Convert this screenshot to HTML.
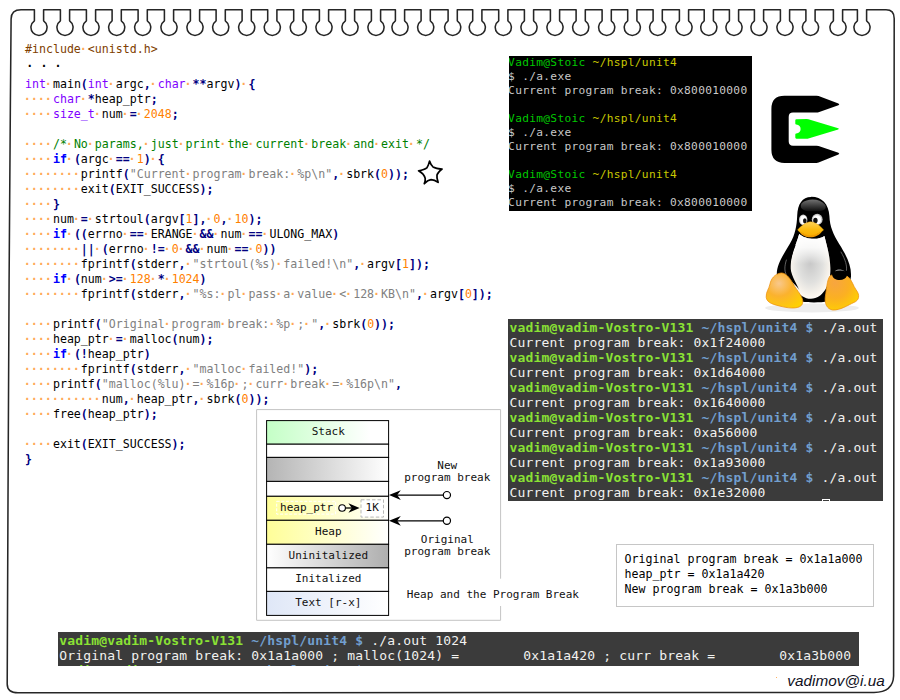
<!DOCTYPE html>
<html lang="en">
<head>
<meta charset="utf-8">
<title>Heap and the Program Break</title>
<style>
html,body{margin:0;padding:0;background:#fff;}
body{width:900px;height:700px;position:relative;overflow:hidden;font-family:"Liberation Sans",sans-serif;}
.abs{position:absolute;}
/* source code */
.code{position:absolute;left:25px;font-family:"DejaVu Sans Mono","Liberation Mono",monospace;font-size:11.6px;line-height:15px;color:#000;}
.code .ln{height:15px;white-space:pre;}
.code i{font-style:normal;font-weight:bold;color:#ffa855;position:relative;left:-1.2px;}
.code .o{color:#000080;font-weight:bold;}
.code .k{color:#0000ff;font-weight:bold;}
.code .t{color:#8000ff;}
.code .n{color:#ff8000;}
.code .s{color:#808080;}
.code .c{color:#008000;}
.code .p{color:#804000;}
/* terminals */
.cyg{position:absolute;left:509px;top:56px;width:243px;height:154.7px;background:#000;color:#c8c8c8;overflow:hidden;
 font-family:"DejaVu Sans Mono","Liberation Mono",monospace;font-size:11.2px;letter-spacing:0.303px;line-height:14px;white-space:pre;}
.cyg div{height:14px;margin-left:-0.9px;}
.cyg .g{color:#00c800;} .cyg .y{color:#c8c800;}
.term{position:absolute;background:#3b3b3b;color:#f2f2f0;overflow:hidden;
 font-family:"DejaVu Sans Mono","Liberation Mono",monospace;font-size:13px;letter-spacing:0.173px;line-height:15px;white-space:pre;}
.term div{height:15px;}
.term b.lg{color:#8ae234;} .term b.lb{color:#729fcf;}
/* diagram */
.dtext{font-family:"DejaVu Sans Mono","Liberation Mono",monospace;font-size:11px;fill:#111;}
.info{position:absolute;left:616px;top:544px;width:256px;height:60.8px;border:1px solid #c6c6c6;background:#fff;
 font-family:"DejaVu Sans Mono","Liberation Mono",monospace;font-size:11.63px;line-height:15px;color:#000;white-space:pre;}
.info div{position:absolute;left:7.6px;height:15px;}
.sig{position:absolute;left:787.2px;top:672px;letter-spacing:0.04px;font-family:"Liberation Sans",sans-serif;font-style:italic;font-size:15.3px;line-height:18px;color:#10101c;white-space:pre;}
</style>
</head>
<body>

<!-- notebook border with spiral notches -->
<svg class="abs" style="left:0;top:0" width="900" height="700" viewBox="0 0 900 700">
<path d="M 7.2 684 L 8.0 500 L 9.1 280 L 10.4 100 L 11.1 19 Q 11.2 9.8 21 9.8 L 34.4 9.8 L 34.4 20.8 A 8.05 8.05 0 1 0 43.6 20.8 L 43.6 9.8 L 60.4 9.8 L 60.4 20.8 A 8.05 8.05 0 1 0 69.6 20.8 L 69.6 9.8 L 86.4 9.8 L 86.4 20.8 A 8.05 8.05 0 1 0 95.6 20.8 L 95.6 9.8 L 112.1 9.8 L 112.1 20.8 A 8.05 8.05 0 1 0 121.3 20.8 L 121.3 9.8 L 138.1 9.8 L 138.1 20.8 A 8.05 8.05 0 1 0 147.3 20.8 L 147.3 9.8 L 164.4 9.8 L 164.4 20.8 A 8.05 8.05 0 1 0 173.6 20.8 L 173.6 9.8 L 190.4 9.8 L 190.4 20.8 A 8.05 8.05 0 1 0 199.6 20.8 L 199.6 9.8 L 216.1 9.8 L 216.1 20.8 A 8.05 8.05 0 1 0 225.3 20.8 L 225.3 9.8 L 242.1 9.8 L 242.1 20.8 A 8.05 8.05 0 1 0 251.3 20.8 L 251.3 9.8 L 267.7 9.8 L 267.7 20.8 A 8.05 8.05 0 1 0 276.9 20.8 L 276.9 9.8 L 293.7 9.8 L 293.7 20.8 A 8.05 8.05 0 1 0 302.9 20.8 L 302.9 9.8 L 319.4 9.8 L 319.4 20.8 A 8.05 8.05 0 1 0 328.6 20.8 L 328.6 9.8 L 345.4 9.8 L 345.4 20.8 A 8.05 8.05 0 1 0 354.6 20.8 L 354.6 9.8 L 371.4 9.8 L 371.4 20.8 A 8.05 8.05 0 1 0 380.6 20.8 L 380.6 9.8 L 395.4 9.8 L 395.4 20.8 A 8.05 8.05 0 1 0 404.6 20.8 L 404.6 9.8 L 421.1 9.8 L 421.1 20.8 A 8.05 8.05 0 1 0 430.3 20.8 L 430.3 9.8 L 448.1 9.8 L 448.1 20.8 A 8.05 8.05 0 1 0 457.3 20.8 L 457.3 9.8 L 472.7 9.8 L 472.7 20.8 A 8.05 8.05 0 1 0 481.9 20.8 L 481.9 9.8 L 498.7 9.8 L 498.7 20.8 A 8.05 8.05 0 1 0 507.9 20.8 L 507.9 9.8 L 524.4 9.8 L 524.4 20.8 A 8.05 8.05 0 1 0 533.6 20.8 L 533.6 9.8 L 550.4 9.8 L 550.4 20.8 A 8.05 8.05 0 1 0 559.6 20.8 L 559.6 9.8 L 576.1 9.8 L 576.1 20.8 A 8.05 8.05 0 1 0 585.3 20.8 L 585.3 9.8 L 602.1 9.8 L 602.1 20.8 A 8.05 8.05 0 1 0 611.3 20.8 L 611.3 9.8 L 627.7 9.8 L 627.7 20.8 A 8.05 8.05 0 1 0 636.9 20.8 L 636.9 9.8 L 653.1 9.8 L 653.1 20.8 A 8.05 8.05 0 1 0 662.3 20.8 L 662.3 9.8 L 679.4 9.8 L 679.4 20.8 A 8.05 8.05 0 1 0 688.6 20.8 L 688.6 9.8 L 704.2 9.8 L 704.2 20.8 A 8.05 8.05 0 1 0 713.4 20.8 L 713.4 9.8 L 729.4 9.8 L 729.4 20.8 A 8.05 8.05 0 1 0 738.6 20.8 L 738.6 9.8 L 754.4 9.8 L 754.4 20.8 A 8.05 8.05 0 1 0 763.6 20.8 L 763.6 9.8 L 780.4 9.8 L 780.4 20.8 A 8.05 8.05 0 1 0 789.6 20.8 L 789.6 9.8 L 805.9 9.8 L 805.9 20.8 A 8.05 8.05 0 1 0 815.1 20.8 L 815.1 9.8 L 833.4 9.8 L 833.4 20.8 A 8.05 8.05 0 1 0 842.6 20.8 L 842.6 9.8 L 857.4 9.8 L 857.4 20.8 A 8.05 8.05 0 1 0 866.6 20.8 L 866.6 9.8 L 886 9.8 Q 894.2 9.8 894.2 18.5 L 893.6 676 Q 893 692.3 874 692.4 L 18 692.8 Q 7.2 692.8 7.2 684" fill="none" stroke="#262626" stroke-width="1.55" stroke-linejoin="round"/>
</svg>

<!-- C source listing -->
<div class="code" style="top:41.5px"><div class="ln"><span class="p">#include</span><i>·</i><span class="p">&lt;unistd.h&gt;</span></div></div>
<div class="code" style="top:55.8px;left:26.3px;font-weight:bold;letter-spacing:0.1px"><div class="ln">. . .</div></div>
<div class="code" style="top:76.7px">
<div class="ln"><span class="t">int</span><i>·</i>main<span class="o">(</span><span class="t">int</span><i>·</i>argc<span class="o">,</span><i>·</i><span class="t">char</span><i>·</i><span class="o">*</span><span class="o">*</span>argv<span class="o">)</span><i>·</i><span class="o">{</span></div>
<div class="ln"><i>····</i><span class="t">char</span><i>·</i><span class="o">*</span>heap_ptr<span class="o">;</span></div>
<div class="ln"><i>····</i><span class="t">size_t</span><i>·</i>num<i>·</i><span class="o">=</span><i>·</i><span class="n">2048</span><span class="o">;</span></div>
<div class="ln">&nbsp;</div>
<div class="ln"><i>····</i><span class="c">/*</span><i>·</i><span class="c">No</span><i>·</i><span class="c">params,</span><i>·</i><span class="c">just</span><i>·</i><span class="c">print</span><i>·</i><span class="c">the</span><i>·</i><span class="c">current</span><i>·</i><span class="c">break</span><i>·</i><span class="c">and</span><i>·</i><span class="c">exit</span><i>·</i><span class="c">*/</span></div>
<div class="ln"><i>····</i><span class="k">if</span><i>·</i><span class="o">(</span>argc<i>·</i><span class="o">=</span><span class="o">=</span><i>·</i><span class="n">1</span><span class="o">)</span><i>·</i><span class="o">{</span></div>
<div class="ln"><i>········</i>printf<span class="o">(</span><span class="s">"Current</span><i>·</i><span class="s">program</span><i>·</i><span class="s">break:</span><i>·</i><span class="s">%p\n"</span><span class="o">,</span><i>·</i>sbrk<span class="o">(</span><span class="n">0</span><span class="o">)</span><span class="o">)</span><span class="o">;</span></div>
<div class="ln"><i>········</i>exit<span class="o">(</span>EXIT_SUCCESS<span class="o">)</span><span class="o">;</span></div>
<div class="ln"><i>····</i><span class="o">}</span></div>
<div class="ln"><i>····</i>num<i>·</i><span class="o">=</span><i>·</i>strtoul<span class="o">(</span>argv<span class="o">[</span><span class="n">1</span><span class="o">]</span><span class="o">,</span><i>·</i><span class="n">0</span><span class="o">,</span><i>·</i><span class="n">10</span><span class="o">)</span><span class="o">;</span></div>
<div class="ln"><i>····</i><span class="k">if</span><i>·</i><span class="o">(</span><span class="o">(</span>errno<i>·</i><span class="o">=</span><span class="o">=</span><i>·</i>ERANGE<i>·</i><span class="o">&amp;</span><span class="o">&amp;</span><i>·</i>num<i>·</i><span class="o">=</span><span class="o">=</span><i>·</i>ULONG_MAX<span class="o">)</span></div>
<div class="ln"><i>········</i><span class="o">|</span><span class="o">|</span><i>·</i><span class="o">(</span>errno<i>·</i><span class="o">!</span><span class="o">=</span><i>·</i><span class="n">0</span><i>·</i><span class="o">&amp;</span><span class="o">&amp;</span><i>·</i>num<i>·</i><span class="o">=</span><span class="o">=</span><i>·</i><span class="n">0</span><span class="o">)</span><span class="o">)</span></div>
<div class="ln"><i>········</i>fprintf<span class="o">(</span>stderr<span class="o">,</span><i>·</i><span class="s">"strtoul(%s)</span><i>·</i><span class="s">failed!\n"</span><span class="o">,</span><i>·</i>argv<span class="o">[</span><span class="n">1</span><span class="o">]</span><span class="o">)</span><span class="o">;</span></div>
<div class="ln"><i>····</i><span class="k">if</span><i>·</i><span class="o">(</span>num<i>·</i><span class="o">&gt;</span><span class="o">=</span><i>·</i><span class="n">128</span><i>·</i><span class="o">*</span><i>·</i><span class="n">1024</span><span class="o">)</span></div>
<div class="ln"><i>········</i>fprintf<span class="o">(</span>stderr<span class="o">,</span><i>·</i><span class="s">"%s:</span><i>·</i><span class="s">pl</span><i>·</i><span class="s">pass</span><i>·</i><span class="s">a</span><i>·</i><span class="s">value</span><i>·</i><span class="s">&lt;</span><i>·</i><span class="s">128</span><i>·</i><span class="s">KB\n"</span><span class="o">,</span><i>·</i>argv<span class="o">[</span><span class="n">0</span><span class="o">]</span><span class="o">)</span><span class="o">;</span></div>
<div class="ln">&nbsp;</div>
<div class="ln"><i>····</i>printf<span class="o">(</span><span class="s">"Original</span><i>·</i><span class="s">program</span><i>·</i><span class="s">break:</span><i>·</i><span class="s">%p</span><i>·</i><span class="s">;</span><i>·</i><span class="s">"</span><span class="o">,</span><i>·</i>sbrk<span class="o">(</span><span class="n">0</span><span class="o">)</span><span class="o">)</span><span class="o">;</span></div>
<div class="ln"><i>····</i>heap_ptr<i>·</i><span class="o">=</span><i>·</i>malloc<span class="o">(</span>num<span class="o">)</span><span class="o">;</span></div>
<div class="ln"><i>····</i><span class="k">if</span><i>·</i><span class="o">(</span><span class="o">!</span>heap_ptr<span class="o">)</span></div>
<div class="ln"><i>········</i>fprintf<span class="o">(</span>stderr<span class="o">,</span><i>·</i><span class="s">"malloc</span><i>·</i><span class="s">failed!"</span><span class="o">)</span><span class="o">;</span></div>
<div class="ln"><i>····</i>printf<span class="o">(</span><span class="s">"malloc(%lu)</span><i>·</i><span class="s">=</span><i>·</i><span class="s">%16p</span><i>·</i><span class="s">;</span><i>·</i><span class="s">curr</span><i>·</i><span class="s">break</span><i>·</i><span class="s">=</span><i>·</i><span class="s">%16p\n"</span><span class="o">,</span></div>
<div class="ln"><i>···········</i>num<span class="o">,</span><i>·</i>heap_ptr<span class="o">,</span><i>·</i>sbrk<span class="o">(</span><span class="n">0</span><span class="o">)</span><span class="o">)</span><span class="o">;</span></div>
<div class="ln"><i>····</i>free<span class="o">(</span>heap_ptr<span class="o">)</span><span class="o">;</span></div>
<div class="ln">&nbsp;</div>
<div class="ln"><i>····</i>exit<span class="o">(</span>EXIT_SUCCESS<span class="o">)</span><span class="o">;</span></div>
<div class="ln"><span class="o">}</span></div>
</div>

<!-- star marker -->
<svg class="abs" style="left:410px;top:152px" width="44" height="44" viewBox="410 152 44 44">
<path d="M429.55 161.1 Q431 165.5 433 166.9 Q436 168.6 442.05 169 Q437.8 172.5 437 175 Q436.5 178 438.1 182.4 Q434.5 179.9 431.1 179.7 Q428 180 424.3 183.7 Q425.5 181 425.2 178.4 Q424.3 174.2 418.6 170.8 Q424.5 169.8 426.8 167.9 Q428.5 165.5 429.55 161.1 Z" fill="#fff" stroke="#000" stroke-width="1.75" stroke-linejoin="round"/>
</svg>

<!-- cygwin console -->
<div class="cyg"><div><span class="g">Vadim@Stoic</span> <span class="y">~/hspl/unit4</span></div><div>$ ./a.exe</div><div>Current program break: 0x800010000</div><div>&nbsp;</div><div><span class="g">Vadim@Stoic</span> <span class="y">~/hspl/unit4</span></div><div>$ ./a.exe</div><div>Current program break: 0x800010000</div><div>&nbsp;</div><div><span class="g">Vadim@Stoic</span> <span class="y">~/hspl/unit4</span></div><div>$ ./a.exe</div><div>Current program break: 0x800010000</div></div>


<!-- cygwin logo -->
<svg class="abs" style="left:760px;top:85px" width="100" height="90" viewBox="760 85 100 90">
<path d="M784.5 95.7 L816.5 95.7 Q817.6 95.7 818.6 96.1 L838.4 103.4 Q840.2 104.3 838.4 105.2 L818.6 112.2 Q817.6 112.6 816.5 112.6 L793 112.6 Q788.7 112.6 788.7 117 L788.7 141.3 Q788.7 145.7 793 145.7 L816.5 145.7 Q817.6 145.7 818.6 146.1 L838.4 152.7 Q840.2 153.6 838.4 154.6 L818.6 162.5 Q817.6 162.9 816.5 162.9 L784.5 162.9 Q771.4 162.9 771.4 149.8 L771.4 108.8 Q771.4 95.7 784.5 95.7 Z" fill="#000"/>
<path d="M796.4 119.2 L806.8 118.9 Q807.6 118.9 808.4 119.2 L838.2 128.3 Q839.6 128.9 838.2 129.5 L808.4 138.4 Q807.6 138.7 806.8 138.7 L796.4 138.7 Q795.3 138.7 795.3 137.6 L795.3 134.4 Q795.3 133.6 796.2 133.4 Q800.6 132.6 800.6 128.9 Q800.6 125.3 796.2 124.5 Q795.3 124.3 795.3 123.5 L795.3 120.3 Q795.3 119.2 796.4 119.2 Z" fill="#00ff00"/>
</svg>

<!-- tux -->
<svg class="abs" style="left:750px;top:180px" width="130" height="140" viewBox="0 0 650 700">
<defs>
<radialGradient id="tBelly" cx="0.5" cy="0.45" r="0.6"><stop offset="0" stop-color="#c8c8c8"/><stop offset="0.5" stop-color="#e0e0de"/><stop offset="0.85" stop-color="#fbf6ee"/><stop offset="1" stop-color="#ffffff"/></radialGradient>
<radialGradient id="tFootL" cx="0.35" cy="0.3" r="0.8"><stop offset="0" stop-color="#f9c88c"/><stop offset="0.45" stop-color="#fbb22e"/><stop offset="1" stop-color="#ffd000"/></radialGradient>
<radialGradient id="tFootR" cx="0.3" cy="0.25" r="0.85"><stop offset="0" stop-color="#f7a540"/><stop offset="0.5" stop-color="#fbb022"/><stop offset="1" stop-color="#ffd200"/></radialGradient>
<linearGradient id="tChest" x1="0" x2="0" y1="0" y2="1"><stop offset="0" stop-color="#ffffff" stop-opacity="1"/><stop offset="0.45" stop-color="#ffffff" stop-opacity="0.8"/><stop offset="1" stop-color="#ffffff" stop-opacity="0"/></linearGradient>
<linearGradient id="tBeak" x1="0" x2="0" y1="0" y2="1"><stop offset="0" stop-color="#fcd25a"/><stop offset="0.55" stop-color="#fbbb10"/><stop offset="1" stop-color="#f9ae00"/></linearGradient>
<linearGradient id="tHead" x1="0" x2="0" y1="0" y2="1"><stop offset="0" stop-color="#8c8c8c"/><stop offset="1" stop-color="#101010"/></linearGradient>
</defs>
<ellipse cx="310" cy="640" rx="235" ry="22" fill="#ededed"/>
<path d="M307 84 C358 84 394 120 397 180 C399 234 418 274 446 320 C484 380 508 430 505 482 C500 524 472 564 440 594 C400 618 240 618 200 594 C160 564 134 524 134 470 C134 420 170 368 200 318 C226 274 234 230 236 178 C238 120 262 85 305 85 Z" fill="#000"/>
<path d="M258 116 C288 90 350 92 376 124 C386 148 366 160 318 156 C268 160 244 142 258 116 Z" fill="url(#tHead)" opacity="0.8"/>
<path d="M246 270 C236 310 204 370 202 440 C200 520 240 592 305 594 C368 592 404 520 402 440 C400 380 384 330 372 280 C345 302 275 298 246 270 Z" fill="url(#tBelly)"/>
<path d="M246 270 C236 310 210 360 204 420 L400 420 C398 370 384 330 372 280 C345 302 275 298 246 270 Z" fill="url(#tChest)"/>
<path d="M203 322 C178 372 160 430 170 468 C196 500 236 530 248 552 C226 505 202 470 202 430 C202 395 214 358 228 326 Z" fill="#000"/>
<path d="M182 400 C172 430 172 455 180 470" stroke="#777" stroke-width="5" fill="none" stroke-linecap="round" opacity="0.8"/>
<path d="M455 360 C478 400 486 430 482 452" stroke="#777" stroke-width="5" fill="none" stroke-linecap="round" opacity="0.8"/>
<ellipse cx="266" cy="199" rx="21" ry="27" fill="#c9c9c9"/>
<ellipse cx="336" cy="197" rx="27" ry="28" fill="#c9c9c9"/>
<ellipse cx="267" cy="200" rx="16" ry="22" fill="#fff"/>
<ellipse cx="335" cy="199" rx="21" ry="23" fill="#fff"/>
<ellipse cx="274" cy="204" rx="9" ry="13" fill="#111"/>
<ellipse cx="327" cy="203" rx="11" ry="14" fill="#111"/>
<path d="M246 256 C266 296 336 296 360 256 C336 276 270 276 246 256 Z" fill="#ef9800"/>
<path d="M238 250 C256 228 284 209 302 209 C324 209 352 230 368 250 C352 266 326 276 302 278 C280 276 252 266 238 250 Z" fill="url(#tBeak)" stroke="#f0a400" stroke-width="2"/>
<path d="M150 466 C176 459 200 490 216 520 C236 556 270 586 263 616 C256 646 200 643 160 633 C120 623 84 616 81 586 C79 560 95 545 100 520 C105 494 124 471 150 466 Z" fill="url(#tFootL)" stroke="#ee9415" stroke-width="4"/>
<path d="M400 480 C420 464 470 468 490 484 C510 500 516 530 531 550 C551 576 546 602 520 612 C490 626 450 652 414 650 C384 646 371 616 377 580 C384 545 384 500 400 480 Z" fill="url(#tFootR)" stroke="#ee9415" stroke-width="4"/>
<path d="M410 472 C408 446 438 434 462 442 C490 450 494 480 472 494 C450 506 414 500 410 472 Z" fill="#000"/>
<path d="M424 456 C436 444 458 446 474 456 C462 452 440 452 424 456 Z" fill="#9a9a9a"/>
</svg>

<!-- linux terminal -->
<div class="term" style="left:508px;top:319px;width:375px;height:181.7px;">
<div style="position:absolute;left:1.6px;top:0.7px"><div><b class="lg">vadim@vadim-Vostro-V131</b> <b class="lb">~/hspl/unit4 $</b> ./a.out</div><div>Current program break: 0x1f24000</div><div><b class="lg">vadim@vadim-Vostro-V131</b> <b class="lb">~/hspl/unit4 $</b> ./a.out</div><div>Current program break: 0x1d64000</div><div><b class="lg">vadim@vadim-Vostro-V131</b> <b class="lb">~/hspl/unit4 $</b> ./a.out</div><div>Current program break: 0x1640000</div><div><b class="lg">vadim@vadim-Vostro-V131</b> <b class="lb">~/hspl/unit4 $</b> ./a.out</div><div>Current program break: 0xa56000</div><div><b class="lg">vadim@vadim-Vostro-V131</b> <b class="lb">~/hspl/unit4 $</b> ./a.out</div><div>Current program break: 0x1a93000</div><div><b class="lg">vadim@vadim-Vostro-V131</b> <b class="lb">~/hspl/unit4 $</b> ./a.out</div><div>Current program break: 0x1e32000</div></div>
<span style="position:absolute;left:313.5px;top:180.4px;width:8px;height:6px;border:1px solid #fff;box-sizing:border-box"></span>
</div>

<!-- bottom terminal -->
<div class="term" style="left:58px;top:632px;width:801px;height:33.6px;">
<div style="position:absolute;left:1.3px;top:0.7px"><div><b class="lg">vadim@vadim-Vostro-V131</b> <b class="lb">~/hspl/unit4 $</b> ./a.out 1024</div><div>Original program break: 0x1a1a000 ; malloc(1024) =        0x1a1a420 ; curr break =        0x1a3b000</div><div><b class="lg">vadim@vadim-Vostro-V131</b> <b class="lb">~/hspl/unit4 $</b> </div></div>
</div>


<!-- memory layout diagram -->
<svg class="abs" style="left:250px;top:400px" width="350" height="232" viewBox="250 400 350 232">
<defs>
<linearGradient id="gGreen" x1="0" x2="1" y1="0" y2="0"><stop offset="0" stop-color="#c4ffc6"/><stop offset="0.85" stop-color="#ffffff"/><stop offset="1" stop-color="#ffffff"/></linearGradient>
<linearGradient id="gGray" x1="0" x2="1" y1="0" y2="0"><stop offset="0" stop-color="#b4b4b4"/><stop offset="1" stop-color="#ffffff"/></linearGradient>
<linearGradient id="gYel" x1="0" x2="1" y1="0" y2="0"><stop offset="0" stop-color="#fffe98"/><stop offset="1" stop-color="#ffffff"/></linearGradient>
<linearGradient id="gGrayR" x1="0" x2="1" y1="0" y2="0"><stop offset="0" stop-color="#ffffff"/><stop offset="1" stop-color="#aeaeae"/></linearGradient>
<linearGradient id="gBlue" x1="0" x2="1" y1="0" y2="0"><stop offset="0" stop-color="#dfe7f7"/><stop offset="1" stop-color="#ffffff"/></linearGradient>
</defs>
<!-- outer frame -->
<path d="M500.6 578.7 L500.6 409.6 L256.6 409.6 L256.6 620.3 L500.6 620.3 L500.6 606" fill="#fff" stroke="#c4c4c4" stroke-width="1"/>
<!-- segments -->
<g stroke="#000" stroke-width="1">
<rect x="266.6" y="420.6" width="122" height="23.6" fill="url(#gGreen)"/>
<rect x="266.6" y="444.2" width="122" height="13.2" fill="#fff"/>
<rect x="266.6" y="457.4" width="122" height="24" fill="url(#gGray)"/>
<rect x="266.6" y="481.4" width="122" height="14.9" fill="#fff"/>
<rect x="266.6" y="496.3" width="122" height="24" fill="url(#gYel)"/>
<rect x="266.6" y="520.3" width="122" height="24" fill="url(#gYel)"/>
<rect x="266.6" y="544.3" width="122" height="23.6" fill="url(#gGrayR)"/>
<rect x="266.6" y="567.9" width="122" height="23.5" fill="#fff"/>
<rect x="266.6" y="591.4" width="122" height="24" fill="url(#gBlue)"/>
</g>
<!-- heap_ptr label + 1K box -->
<rect x="276.7" y="501.3" width="58.9" height="12.8" fill="none" stroke="#fff" stroke-width="1" stroke-dasharray="3 1.6"/>
<rect x="361" y="499.8" width="22.5" height="17.3" fill="#fff" stroke="#b8b8b8" stroke-width="1" stroke-dasharray="3.5 2"/>
<circle cx="342.1" cy="508" r="3.3" fill="#fff" stroke="#000" stroke-width="1.1"/>
<path d="M345.5 508 L353 508" stroke="#000" stroke-width="1.3" fill="none"/>
<path d="M359.6 508 L348.4 503.2 L351.8 508 L348.4 512.8 Z" fill="#000"/>
<!-- break arrows -->
<g stroke="#000" stroke-width="1.2" fill="none">
<path d="M397 495.1 L443.2 495.1"/>
<path d="M397 520.8 L443.2 520.8"/>
<circle cx="446.9" cy="495.1" r="3.6" fill="#fff"/>
<circle cx="446.9" cy="520.8" r="3.6" fill="#fff"/>
</g>
<path d="M389 495.1 L400.8 490.2 L397.2 495.1 L400.8 500 Z" fill="#000"/>
<path d="M389 520.8 L400.8 515.9 L397.2 520.8 L400.8 525.7 Z" fill="#000"/>
<!-- labels -->
<g class="dtext" text-anchor="middle">
<text x="328.3" y="435.2">Stack</text>
<text x="306.6" y="510.8">heap_ptr</text>
<text x="372.2" y="511.2">1K</text>
<text x="328.3" y="534.8">Heap</text>
<text x="328.3" y="558.8">Uninitalized</text>
<text x="328.3" y="582.0">Initalized</text>
<text x="328.3" y="606.0">Text [r-x]</text>
<text x="447.3" y="468.6">New</text>
<text x="447.3" y="480.9">program break</text>
<text x="447.3" y="542.6">Original</text>
<text x="447.3" y="554.7">program break</text>
</g>
<text class="dtext" x="406.8" y="597.8">Heap and the Program Break</text>
</svg>

<!-- info box -->
<div class="info">
<div style="top:6.9px">Original program break = 0x1a1a000</div>
<div style="top:21.9px">heap_ptr = 0x1a1a420</div>
<div style="top:36.9px">New program break = 0x1a3b000</div>
</div>

<div class="abs" style="left:776px;top:677px;width:1px;height:1px;background:#ffb060"></div>
<div class="sig">vadimov@i.ua</div>

</body>
</html>
